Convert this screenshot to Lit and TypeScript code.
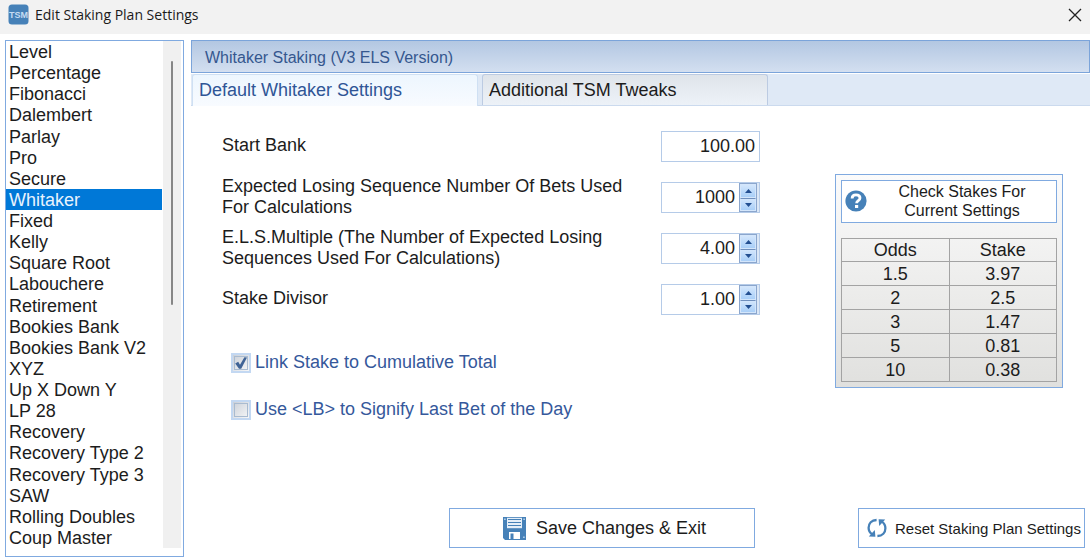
import { LitElement, html, css } from "lit";
import { customElement, property, state } from "lit/decorators.js";
import { classMap } from "lit/directives/class-map.js";

const PLANS = [
  "Level", "Percentage", "Fibonacci", "Dalembert", "Parlay", "Pro", "Secure", "Whitaker",
  "Fixed", "Kelly", "Square Root", "Labouchere", "Retirement", "Bookies Bank",
  "Bookies Bank V2", "XYZ", "Up X Down Y", "LP 28", "Recovery", "Recovery Type 2",
  "Recovery Type 3", "SAW", "Rolling Doubles", "Coup Master",
];

const STAKES = [
  ["1.5", "3.97"],
  ["2", "2.5"],
  ["3", "1.47"],
  ["5", "0.81"],
  ["10", "0.38"],
];

const FIELDS = [
  { label: "Start Bank", value: "100.00", spin: false },
  { label: "Expected Losing Sequence Number Of Bets Used For Calculations", value: "1000", spin: true },
  { label: "E.L.S.Multiple (The Number of Expected Losing Sequences Used For Calculations)", value: "4.00", spin: true },
  { label: "Stake Divisor", value: "1.00", spin: true },
];

@customElement("plan-list")
class PlanList extends LitElement {
  @state() selected = "Whitaker";

  static styles = css`
    :host {
      display: grid;
      grid-template-columns: minmax(0, 1fr) 18px;
      gap: 1px;
      box-sizing: border-box;
      padding: 0 2px 8px 0;
      border: 1px solid #80aae0;
      background: #fff;
    }
    .items {
      display: grid;
      grid-auto-rows: 1fr;
      margin: 0;
      padding: 0;
      border: 0;
      min-width: 0;
    }
    .item {
      display: flex;
      align-items: center;
      padding: 2px 0 0 3px;
      line-height: 19px;
      white-space: nowrap;
      color: #1c1c1c;
    }
    .item.selected {
      background: #0078d7;
      color: #e8f3fd;
    }
    .radio {
      appearance: none;
      width: 0;
      height: 0;
      margin: 0;
    }
    .track {
      display: grid;
      grid-template-rows: 4fr 48fr 48fr;
      justify-items: center;
      background: #f0f0f0;
    }
    .thumb {
      grid-row: 2;
      width: 2px;
      border-radius: 1px;
      background: #868686;
    }
  `;

  render() {
    return html`
      <fieldset class="items" aria-label="Staking plans">
        ${PLANS.map(
          (name) => html`<label class=${classMap({ item: true, selected: name === this.selected })}>
            <input class="radio" type="radio" name="plan" .checked=${name === this.selected}
              @change=${() => (this.selected = name)} />${name}</label>`
        )}
      </fieldset>
      <div class="track"><div class="thumb"></div></div>
    `;
  }
}

@customElement("number-field")
class NumberField extends LitElement {
  @property() value = "";
  @property() label = "";
  @property({ type: Boolean }) spin = false;

  static styles = css`
    :host {
      display: grid;
      grid-template-columns: minmax(0, 1fr) 99px;
      align-items: center;
    }
    .label {
      max-width: 420px;
      padding-bottom: 2px;
    }
    .frame {
      display: flex;
      align-items: center;
      box-sizing: border-box;
      height: 31px;
      padding-right: 2px;
      border: 1px solid #b5cbe8;
      background: #fff;
    }
    .input {
      flex: 1;
      min-width: 0;
      padding: 0 2px;
      border: 0;
      outline: 0;
      background: none;
      text-align: right;
      font: 18px "Liberation Sans", Arial, sans-serif;
      color: #1c1c1c;
    }
    .steps {
      display: grid;
      grid-template-rows: 14px 13px;
      width: 18px;
      margin-left: 2px;
      box-sizing: border-box;
      border: 1px solid #8ba6cd;
      box-shadow: 2px 0 0 #dbe7f6;
    }
    .step {
      display: grid;
      place-items: center;
      padding: 0;
      border: 1px solid #d4e6fb;
      background: linear-gradient(#d3e6fc, #a9cff8);
    }
    .step + .step {
      border-top: 1px solid #6f8fbd;
    }
  `;

  private step(by: number) {
    const decimals = (this.value.split(".")[1] ?? "").length;
    this.value = (Number(this.value) + by).toFixed(decimals);
  }

  render() {
    return html`
      <label class="label" for="value">${this.label}</label>
      <div class="frame">
        <input class="input" id="value" type="text" .value=${this.value} />
        ${this.spin
          ? html`<div class="steps">
              <button class="step" aria-label="Increase" @click=${() => this.step(1)}>
                <svg width="7" height="4" viewBox="0 0 7 4"><path d="M0 4 3.5 0 7 4Z" fill="#234f91" /></svg>
              </button>
              <button class="step" aria-label="Decrease" @click=${() => this.step(-1)}>
                <svg width="7" height="4" viewBox="0 0 7 4"><path d="M0 0 3.5 4 7 0Z" fill="#234f91" /></svg>
              </button>
            </div>`
          : ""}
      </div>
    `;
  }
}

@customElement("stake-check")
class StakeCheck extends LitElement {
  static styles = css`
    :host {
      display: block;
      box-sizing: border-box;
      padding: 5px;
      border: 1px solid #80aae0;
      background: linear-gradient(#fbfbfb, #e0e0de);
    }
    .check {
      display: flex;
      align-items: center;
      width: 100%;
      height: 43px;
      padding: 0 3px 1px;
      border: 1px solid #80aae0;
      background: #fff;
      font: 16px/19px "Liberation Sans", Arial, sans-serif;
      color: #1c1c1c;
    }
    .caption {
      flex: 1;
      padding: 0 26px 0 30px;
    }
    .stakes {
      width: 100%;
      height: 144px;
      margin-top: 15px;
      border-collapse: collapse;
      table-layout: fixed;
      text-align: center;
      font-size: 18px;
      line-height: 22px;
    }
    .cell {
      padding: 0;
      border: 1px solid #a3a3a3;
      font-weight: 400;
    }
  `;

  render() {
    return html`
      <button class="check">
        <svg width="22" height="22" viewBox="0 0 22 22">
          <circle cx="11" cy="11" r="10.6" fill="#4681b8" />
          <path d="M7.1 8.5C7.1 6 8.8 4.9 11 4.9s4 1.1 4 3.2c0 2.6-3.4 2.5-3.4 5.1" fill="none" stroke="#fff" stroke-width="2.8" />
          <path d="M10 15h3.2v3H10z" fill="#fff" />
        </svg>
        <span class="caption">Check Stakes For Current Settings</span>
      </button>
      <table class="stakes">
        <thead><tr><th class="cell" scope="col">Odds</th><th class="cell" scope="col">Stake</th></tr></thead>
        <tbody>
          ${STAKES.map(([odds, stake]) => html`<tr><td class="cell">${odds}</td><td class="cell">${stake}</td></tr>`)}
        </tbody>
      </table>
    `;
  }
}

@customElement("app-root")
class AppRoot extends LitElement {
  @state() tab = 0;
  @state() checks = [true, false];

  static styles = css`
    :host {
      display: flex;
      flex-direction: column;
      min-height: 100vh;
      box-sizing: border-box;
      background: #fff;
      font: 18px/21px "Liberation Sans", Arial, sans-serif;
      color: #1c1c1c;
    }
    .titlebar {
      display: flex;
      align-items: center;
      gap: 6px;
      height: 34px;
      box-sizing: border-box;
      padding: 0 8px 5px;
      background: #f2f2f2;
    }
    .title {
      flex: 1;
      margin: 0;
      font: 14px/20px "Open Sans", "Noto Sans", sans-serif;
      color: #1a1a1a;
    }
    .close {
      display: grid;
      padding: 0;
      border: 0;
      background: none;
    }
    .body {
      flex: 1;
      display: grid;
      grid-template-columns: 179px minmax(0, 1fr);
      gap: 7px;
      padding: 6px 0 1px 5px;
    }
    .panel {
      display: flex;
      flex-direction: column;
    }
    .heading {
      margin: 0;
      padding: 2px 13px 0;
      border: 1px solid #7ba4da;
      background: linear-gradient(#b3c7e2, #d3dff0);
      font-size: 16px;
      font-weight: 400;
      line-height: 29px;
      color: #35578f;
    }
    .tabs {
      display: flex;
      align-items: flex-start;
      gap: 4px;
      height: 32px;
      box-sizing: border-box;
      padding-left: 1px;
      margin-top: 1px;
      border-bottom: 1px solid #cbdaee;
      background: #dfe9f6;
    }
    .tab {
      width: 286px;
      height: 31px;
      box-sizing: border-box;
      padding: 0 6px;
      border: 1px solid #bccbe2;
      border-bottom: 0;
      border-radius: 3px 3px 0 0;
      background: linear-gradient(#dfe4ea, #edf2f8);
      text-align: left;
      font: inherit;
      color: #1c1c1c;
    }
    .tab.active {
      height: 32px;
      border-color: #cfe0f3;
      background: linear-gradient(#edf6fe, #f8fbff);
      color: #2f5596;
    }
    .content {
      flex: 1;
      display: flex;
      align-items: flex-start;
      gap: 75px;
      padding: 15px 27px 0 31px;
    }
    .form {
      flex: 1;
      min-width: 0;
    }
    .fields {
      display: grid;
      grid-auto-rows: 51px;
    }
    .checks {
      display: grid;
      gap: 26px;
      padding: 27px 0 0 9px;
    }
    .option {
      display: flex;
      align-items: center;
      gap: 4px;
      color: #35589b;
    }
    .mark {
      display: grid;
      width: 20px;
      height: 20px;
    }
    .box {
      grid-area: 1 / 1;
      appearance: none;
      box-sizing: border-box;
      width: 20px;
      height: 20px;
      margin: 0;
      border: 2px solid #c3d8f2;
      outline: 1px solid #a9bbd0;
      outline-offset: -4px;
      background: linear-gradient(135deg, #cbd0d8, #f6f7f8);
    }
    .tick {
      grid-area: 1 / 1;
      pointer-events: none;
    }
    .side {
      width: 228px;
      margin-top: 53px;
    }
    .footer {
      display: flex;
      justify-content: flex-end;
      gap: 103px;
      padding: 0 5px 9px 0;
    }
    .action {
      display: flex;
      align-items: center;
      justify-content: center;
      gap: 10px;
      height: 40px;
      padding: 0 0 0 5px;
      border: 1px solid #80aae0;
      background: #fff;
      font: inherit;
      white-space: nowrap;
      color: #1c1c1c;
    }
    .save {
      width: 306px;
    }
    .reset {
      width: 227px;
      gap: 8px;
      font-size: 15px;
    }
  `;

  private toggle(index: number) {
    this.checks = this.checks.map((on, i) => (i === index ? !on : on));
  }

  private renderCheck(index: number, text: string) {
    return html`<label class="option">
      <span class="mark">
        <input class="box" type="checkbox" .checked=${this.checks[index]} @change=${() => this.toggle(index)} />
        ${this.checks[index]
          ? html`<svg class="tick" width="20" height="20" viewBox="0 0 20 20">
              <path d="M4.2 10.4 7.2 8.8l1.8 3 4.4-7.6 2.6.2-5.8 11.4H8z" fill="#3f6396" />
            </svg>`
          : ""}
      </span>${text}</label>`;
  }

  render() {
    return html`
      <header class="titlebar">
        <svg width="21" height="21" viewBox="0 0 21 21">
          <rect x="0.5" y="0.5" width="20" height="20" rx="3.5" fill="#4681b8" />
          <text x="10.5" y="13.5" text-anchor="middle" font-family="Liberation Sans, sans-serif" font-size="9" font-weight="700" fill="#c5dcf2">TSM</text>
        </svg>
        <h1 class="title">Edit Staking Plan Settings</h1>
        <button class="close" aria-label="Close">
          <svg width="14" height="14" viewBox="0 0 14 14"><path d="M1 1 13 13M13 1 1 13" stroke="#222" stroke-width="1.3" /></svg>
        </button>
      </header>
      <main class="body">
        <plan-list></plan-list>
        <section class="panel">
          <h2 class="heading">Whitaker Staking (V3 ELS Version)</h2>
          <div class="tabs" role="tablist">
            ${["Default Whitaker Settings", "Additional TSM Tweaks"].map(
              (name, i) => html`<button class=${classMap({ tab: true, active: this.tab === i })} role="tab"
                aria-selected=${this.tab === i} @click=${() => (this.tab = i)}>${name}</button>`
            )}
          </div>
          <div class="content">
            <div class="form">
              <div class="fields">
                ${FIELDS.map(
                  (f) => html`<number-field .label=${f.label} .value=${f.value} ?spin=${f.spin}></number-field>`
                )}
              </div>
              <div class="checks">
                ${this.renderCheck(0, "Link Stake to Cumulative Total")}
                ${this.renderCheck(1, "Use <LB> to Signify Last Bet of the Day")}
              </div>
            </div>
            <stake-check class="side"></stake-check>
          </div>
          <footer class="footer">
            <button class="action save">
              <svg width="23" height="23" viewBox="0 0 23 23">
                <path d="M0 0h23v23H2l-2-2z" fill="#4681b8" />
                <path d="M4 0.8h15v10.4H4z" fill="#e4eef8" />
                <path d="M5 2.5h13M5 5.5h13M5 8.5h13" stroke="#4681b8" stroke-width="1.1" />
                <path d="M6 15h11v7H6z" fill="#fff" />
                <path d="M7.5 16.5h3V22h-3z" fill="#4681b8" />
                <path d="M1.2 1.5h1.4v1.4H1.2zM20.4 1.5h1.4v1.4h-1.4zM20.2 19.5h1.4v1.4h-1.4z" fill="#c5dcf2" />
              </svg>
              Save Changes &amp; Exit
            </button>
            <button class="action reset">
              <svg width="20" height="20" viewBox="0 0 20 20">
                <path d="M9.6 2C4.6 2.2 1.6 5.6 1.6 9.8c0 3 1.2 5 3.6 6.6" fill="none" stroke="#4681b8" stroke-width="2.3" />
                <path d="M1.8 18.6 8.4 18.8 7.8 12z" fill="#4681b8" />
                <path d="M10.4 18c5-.2 8-3.6 8-7.8 0-3-1.2-5-3.6-6.6" fill="none" stroke="#4681b8" stroke-width="2.3" />
                <path d="M18.2 1.4 11.6 1.2 12.2 8z" fill="#4681b8" />
              </svg>
              Reset Staking Plan Settings
            </button>
          </footer>
        </section>
      </main>
    `;
  }
}
